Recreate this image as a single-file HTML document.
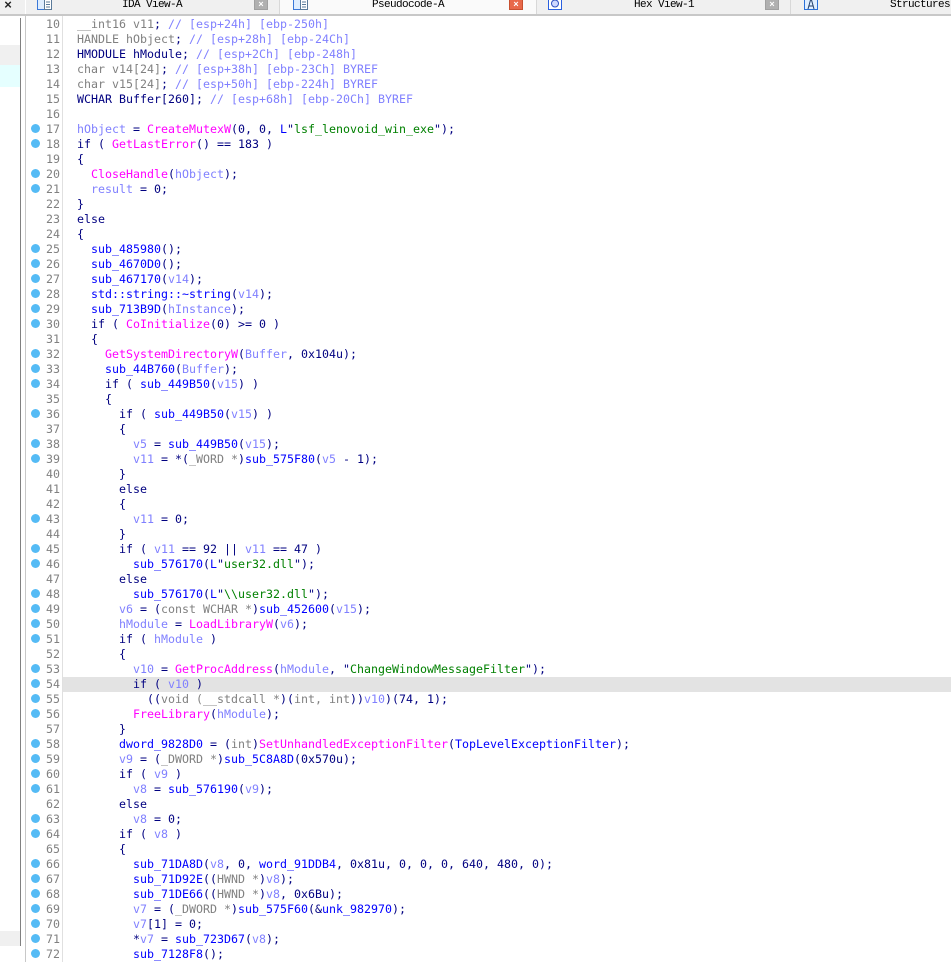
<!DOCTYPE html>
<html><head><meta charset="utf-8"><style>
html,body{margin:0;padding:0;background:#fff;width:951px;height:962px;overflow:hidden}
div{position:absolute}
#code,#nums{position:absolute;font:11.63px/15px "DejaVu Sans Mono","Liberation Mono",monospace;white-space:pre;margin:0;color:#000080}
#code{left:77px;top:17px}
#nums{left:30px;width:30px;top:17px;text-align:right;color:#808080}
.g{color:#808080}.v{color:#8080ff}.f{color:#ff00ff}.s{color:#0000ff}.t{color:#008000}.c{color:#8080ff}
.tab{top:0;height:14px;background:#f0f0f0;border-right:1px solid #d8d8d8}
.tl{top:-2px;font:11px/14px "Liberation Mono",monospace;letter-spacing:-.6px;color:#000}
.x{top:0;width:12px;height:9px;background:#b0b0b0;border:1px solid #a0a0a0;border-top:0;color:#fff;font:bold 9px/8px "Liberation Sans",sans-serif;text-align:center}
.d{left:31px;width:9px;height:9px;border-radius:50%;background:#55bbf5}
</style></head><body>
<div style="left:0;top:18px;width:20px;height:928px;background:#fff;border-right:1px solid #808080"></div>
<div style="left:0;top:45px;width:20px;height:20px;background:#f0f0f0"></div>
<div style="left:0;top:65px;width:20px;height:22px;background:#e5ffff"></div>
<div style="left:0;top:931px;width:20px;height:15px;background:#f0f0f0"></div>
<div style="left:0;top:0;width:25px;height:14px;background:#f0f0f0"></div>
<div style="left:2px;top:-3px;width:12px;font:bold 13px/15px 'Liberation Sans',sans-serif;color:#222;text-align:center">×</div>
<div style="left:0;top:14px;width:951px;height:2px;background:#c8c8c8"></div>
<div style="left:25px;top:14px;width:1px;height:948px;background:#c8c8c8"></div>
<div style="left:62px;top:16px;width:1px;height:946px;background:#e0e0e0"></div>
<div class="tab" style="left:26px;width:253px"></div>
<div class="tab" style="left:280px;width:256px;background:#fafafa"></div>
<div class="tab" style="left:537px;width:253px"></div>
<div class="tab" style="left:791px;width:160px"></div>
<svg style="position:absolute;left:37px;top:0" width="16" height="11"><path d="M.5 0V9.500H7.500V0" fill="#dfeeff" stroke="#3a78d8"/><path d="M7.500 0V9.500H14.500V0M9 2H13M9 4.500H13M9 7H13" fill="#fff" stroke="#5a7a9a"/></svg>
<svg style="position:absolute;left:293px;top:0" width="16" height="11"><path d="M.5 0V9.500H7.500V0" fill="#dfeeff" stroke="#3a78d8"/><path d="M7.500 0V9.500H14.500V0M9 2H13M9 4.500H13M9 7H13" fill="#fff" stroke="#5a7a9a"/></svg>
<svg style="position:absolute;left:548px;top:0" width="15" height="11"><path d="M.5 0V9.500H13.500V0" fill="#fff" stroke="#2a60e0"/><circle cx="7" cy="3.500" r="3.500" fill="#cfd8ff" stroke="#3050c0"/></svg>
<svg style="position:absolute;left:804px;top:0" width="15" height="11"><path d="M.5 0V9.500H13.500V0" fill="#dfeeff" stroke="#2a70d8"/><path d="M4 9L6.500 0H7.500L10 9M5 6H9" fill="none" stroke="#24406a"/></svg>
<div class="tl" style="left:122px">IDA View-A</div>
<div class="tl" style="left:372px">Pseudocode-A</div>
<div class="tl" style="left:634px">Hex View-1</div>
<div class="tl" style="left:890px">Structures</div>
<div class="x" style="left:254px">×</div>
<div class="x" style="left:509px;background:#e8694a;border-color:#c85030">×</div>
<div class="x" style="left:765px">×</div>
<div style="left:63px;top:677px;width:888px;height:15px;background:#e3e3e3"></div>
<pre id="nums">10
11
12
13
14
15
16
17
18
19
20
21
22
23
24
25
26
27
28
29
30
31
32
33
34
35
36
37
38
39
40
41
42
43
44
45
46
47
48
49
50
51
52
53
54
55
56
57
58
59
60
61
62
63
64
65
66
67
68
69
70
71
72</pre>
<pre id="code"><span class="g">__int16 v11</span>; <span class="c">// [esp+24h] [ebp-250h]</span>
<span class="g">HANDLE hObject</span>; <span class="c">// [esp+28h] [ebp-24Ch]</span>
HMODULE hModule; <span class="c">// [esp+2Ch] [ebp-248h]</span>
<span class="g">char v14[24]</span>; <span class="c">// [esp+38h] [ebp-23Ch] BYREF</span>
<span class="g">char v15[24]</span>; <span class="c">// [esp+50h] [ebp-224h] BYREF</span>
WCHAR Buffer[260]; <span class="c">// [esp+68h] [ebp-20Ch] BYREF</span>

<span class="v">hObject</span> = <span class="f">CreateMutexW</span>(0, 0, <span class="s">L</span>"<span class="t">lsf_lenovoid_win_exe</span>");
if ( <span class="f">GetLastError</span>() == 183 )
{
  <span class="f">CloseHandle</span>(<span class="v">hObject</span>);
  <span class="v">result</span> = 0;
}
else
{
  <span class="s">sub_485980</span>();
  <span class="s">sub_4670D0</span>();
  <span class="s">sub_467170</span>(<span class="v">v14</span>);
  <span class="s">std::string::~string</span>(<span class="v">v14</span>);
  <span class="s">sub_713B9D</span>(<span class="v">hInstance</span>);
  if ( <span class="f">CoInitialize</span>(0) &gt;= 0 )
  {
    <span class="f">GetSystemDirectoryW</span>(<span class="v">Buffer</span>, 0x104u);
    <span class="s">sub_44B760</span>(<span class="v">Buffer</span>);
    if ( <span class="s">sub_449B50</span>(<span class="v">v15</span>) )
    {
      if ( <span class="s">sub_449B50</span>(<span class="v">v15</span>) )
      {
        <span class="v">v5</span> = <span class="s">sub_449B50</span>(<span class="v">v15</span>);
        <span class="v">v11</span> = *(<span class="g">_WORD *</span>)<span class="s">sub_575F80</span>(<span class="v">v5</span> - 1);
      }
      else
      {
        <span class="v">v11</span> = 0;
      }
      if ( <span class="v">v11</span> == 92 || <span class="v">v11</span> == 47 )
        <span class="s">sub_576170</span>(<span class="s">L</span>"<span class="t">user32.dll</span>");
      else
        <span class="s">sub_576170</span>(<span class="s">L</span>"<span class="t">\\user32.dll</span>");
      <span class="v">v6</span> = (<span class="g">const WCHAR *</span>)<span class="s">sub_452600</span>(<span class="v">v15</span>);
      <span class="v">hModule</span> = <span class="f">LoadLibraryW</span>(<span class="v">v6</span>);
      if ( <span class="v">hModule</span> )
      {
        <span class="v">v10</span> = <span class="f">GetProcAddress</span>(<span class="v">hModule</span>, "<span class="t">ChangeWindowMessageFilter</span>");
        if ( <span class="v">v10</span> )
          ((<span class="g">void (__stdcall *</span>)(<span class="g">int, int</span>))<span class="v">v10</span>)(74, 1);
        <span class="f">FreeLibrary</span>(<span class="v">hModule</span>);
      }
      <span class="s">dword_9828D0</span> = (<span class="g">int</span>)<span class="f">SetUnhandledExceptionFilter</span>(<span class="s">TopLevelExceptionFilter</span>);
      <span class="v">v9</span> = (<span class="g">_DWORD *</span>)<span class="s">sub_5C8A8D</span>(0x570u);
      if ( <span class="v">v9</span> )
        <span class="v">v8</span> = <span class="s">sub_576190</span>(<span class="v">v9</span>);
      else
        <span class="v">v8</span> = 0;
      if ( <span class="v">v8</span> )
      {
        <span class="s">sub_71DA8D</span>(<span class="v">v8</span>, 0, <span class="s">word_91DDB4</span>, 0x81u, 0, 0, 0, 640, 480, 0);
        <span class="s">sub_71D92E</span>((<span class="g">HWND *</span>)<span class="v">v8</span>);
        <span class="s">sub_71DE66</span>((<span class="g">HWND *</span>)<span class="v">v8</span>, 0x6Bu);
        <span class="v">v7</span> = (<span class="g">_DWORD *</span>)<span class="s">sub_575F60</span>(&amp;<span class="s">unk_982970</span>);
        <span class="v">v7</span>[1] = 0;
        *<span class="v">v7</span> = <span class="s">sub_723D67</span>(<span class="v">v8</span>);
        <span class="s">sub_7128F8</span>();</pre>
<div class="d" style="top:124px"></div><div class="d" style="top:139px"></div><div class="d" style="top:169px"></div><div class="d" style="top:184px"></div>
<div class="d" style="top:244px"></div><div class="d" style="top:259px"></div><div class="d" style="top:274px"></div><div class="d" style="top:289px"></div><div class="d" style="top:304px"></div><div class="d" style="top:319px"></div>
<div class="d" style="top:349px"></div><div class="d" style="top:364px"></div><div class="d" style="top:379px"></div><div class="d" style="top:409px"></div><div class="d" style="top:439px"></div><div class="d" style="top:454px"></div>
<div class="d" style="top:514px"></div><div class="d" style="top:544px"></div><div class="d" style="top:559px"></div><div class="d" style="top:589px"></div><div class="d" style="top:604px"></div><div class="d" style="top:619px"></div><div class="d" style="top:634px"></div>
<div class="d" style="top:664px"></div><div class="d" style="top:679px"></div><div class="d" style="top:694px"></div><div class="d" style="top:709px"></div><div class="d" style="top:739px"></div><div class="d" style="top:754px"></div><div class="d" style="top:769px"></div><div class="d" style="top:784px"></div><div class="d" style="top:814px"></div><div class="d" style="top:829px"></div>
<div class="d" style="top:859px"></div><div class="d" style="top:874px"></div><div class="d" style="top:889px"></div><div class="d" style="top:904px"></div><div class="d" style="top:919px"></div><div class="d" style="top:934px"></div><div class="d" style="top:949px"></div>
</body></html>
